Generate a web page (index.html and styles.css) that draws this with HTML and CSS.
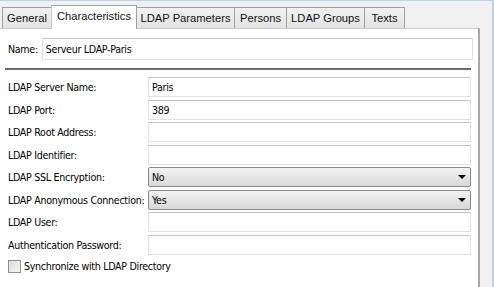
FILE: index.html
```html
<!DOCTYPE html>
<html lang="en">
<head>
    <meta charset="UTF-8">
    <title>LDAP Server</title>
    <link rel="stylesheet" href="styles.css">
</head>
<body>
    <div class="window">
        <div class="tabs">
            <div class="tab">General</div>
            <div class="tab active">Characteristics</div>
            <div class="tab">LDAP Parameters</div>
            <div class="tab">Persons</div>
            <div class="tab">LDAP Groups</div>
            <div class="tab">Texts</div>
        </div>
        <div class="panel">
            <div class="name-row">
                <label for="name">Name:</label>
                <input type="text" id="name" value="Serveur LDAP-Paris">
            </div>
            <hr class="separator">
            <div class="fields">
                <label>LDAP Server Name:</label>
                <input type="text" value="Paris">
                <label>LDAP Port:</label>
                <input type="text" value="389">
                <label>LDAP Root Address:</label>
                <input type="text">
                <label>LDAP Identifier:</label>
                <input type="text">
                <label>LDAP SSL Encryption:</label>
                <div class="select"><span>No</span><span class="arrow"></span></div>
                <label>LDAP Anonymous Connection:</label>
                <div class="select"><span>Yes</span><span class="arrow"></span></div>
                <label>LDAP User:</label>
                <input type="text">
                <label>Authentication Password:</label>
                <input type="text">
            </div>
            <div class="check-row">
                <span class="checkbox"></span>
                <span>Synchronize with LDAP Directory</span>
            </div>
        </div>
    </div>
</body>
</html>
```

FILE: styles.css
```css
body {
    margin: 0;
    background-color: #f0f0f0;
    font-family: 'DejaVu Sans Condensed', 'DejaVu Sans', sans-serif;
    font-size: 10.6px;
    letter-spacing: -0.3px;
    color: #000;
}

.window {
    height: 286px;
    width: 492px;
    border-top: 1px solid #bcd2ea;
    border-right: 2px solid #bcd2ea;
    display: flex;
    flex-direction: column;
    overflow: hidden;
}

/* Tab strip */
.tabs {
    display: flex;
    align-items: flex-end;
    padding-left: 2px;
    margin-top: 2px;
    height: 25px;
    font-family: 'Liberation Sans', Arial, sans-serif;
    font-size: 11.2px;
    letter-spacing: 0;
    color: #111;
}

.tab {
    height: 21px;
    line-height: 21px;
    text-align: center;
    border: 1px solid #a0a0a0;
    border-bottom: none;
    border-left: none;
    background: linear-gradient(#f2f2f2, #e3e3e3);
    box-sizing: border-box;
}

.tab:nth-child(1) { width: 50px; border-left: 1px solid #a0a0a0; }
.tab:nth-child(2) { width: 86px; }
.tab:nth-child(3) { width: 98px; }
.tab:nth-child(4) { width: 52px; }
.tab:nth-child(5) { width: 78px; }
.tab:nth-child(6) { width: 40px; }

.tab.active {
    height: 24px;
    background: #fff;
    border-left: 1px solid #c8c8c8;
    margin-left: -1px;
    margin-bottom: -1px;
    position: relative;
    line-height: 20px;
}

.panel {
    flex: 1;
    width: 478px;
    background: #fff;
    border-top: 1px solid #c8c8c8;
    border-right: 2px solid #a8a8a8;
    padding: 9px 0 0 0;
}

.name-row {
    display: flex;
    align-items: center;
    gap: 4px;
    padding-left: 8px;
}

input {
    font-family: 'DejaVu Sans Condensed', 'DejaVu Sans', sans-serif;
    font-size: 10.6px;
    letter-spacing: -0.3px;
    height: 20px;
    box-sizing: border-box;
    border: 1px solid #e0e0e6;
    border-top-color: #c4c4c4;
    padding: 0 3px;
    margin: 0;
    background: #fff;
}

.name-row input {
    width: 431px;
    height: 22px;
}

.separator {
    margin: 8px 8px 0 5px;
    border: none;
    border-top: 2px solid #6a6a6a;
    width: 466px;
}

.fields {
    display: grid;
    grid-template-columns: 140px 323px;
    row-gap: 2.5px;
    align-items: center;
    padding: 7px 0 0 8px;
}

.fields label {
    height: 20px;
    line-height: 20px;
    white-space: nowrap;
}

.select {
    height: 20px;
    box-sizing: border-box;
    border: 1px solid #8a8a8a;
    border-radius: 2px;
    background: linear-gradient(#f4f4f4, #d8d8d8);
    display: flex;
    align-items: center;
    justify-content: space-between;
    padding: 0 4px 0 3px;
}

.arrow {
    width: 0;
    height: 0;
    border-left: 4px solid transparent;
    border-right: 4px solid transparent;
    border-top: 4px solid #000;
}

.check-row {
    display: flex;
    align-items: center;
    gap: 3px;
    padding: 5px 0 0 8px;
}

.checkbox {
    width: 11px;
    height: 11px;
    border: 1px solid #8e8f8f;
    background: linear-gradient(135deg, #dcdcdc, #f6f6f6);
}
```
